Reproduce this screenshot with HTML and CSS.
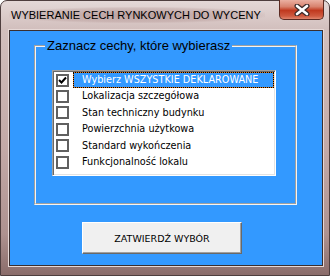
FILE: index.html
```html
<!DOCTYPE html>
<html lang="pl">
<head>
    <meta charset="UTF-8">
    <title>Wybieranie cech rynkowych</title>
    <link rel="stylesheet" href="styles.css">
</head>
<body>

<div class="window">
    <div class="title-bar">
        <span class="title">WYBIERANIE CECH RYNKOWYCH DO WYCENY</span>
        <div class="close-btn">
            <svg width="16" height="12" viewBox="0 0 16 12">
                <path d="M3 2 L13 10 M13 2 L3 10" stroke="#3c2a2a" stroke-width="5" stroke-linecap="round"/>
                <path d="M3 2 L13 10 M13 2 L3 10" stroke="#fff" stroke-width="2.6" stroke-linecap="round"/>
            </svg>
        </div>
    </div>

    <div class="client">
        <fieldset class="group">
            <legend>Zaznacz cechy, które wybierasz</legend>
            <div class="listbox">
                <!-- pierwsza pozycja zaznaczona -->
                <div class="row">
                    <span class="check">
                        <svg width="9" height="9" viewBox="0 0 9 9">
                            <polyline points="1,4 3.5,6.5 8,1.5" fill="none" stroke="#000" stroke-width="2"/>
                        </svg>
                    </span>
                    <span class="label selected">Wybierz WSZYSTKIE DEKLAROWANE</span>
                </div>
                <div class="row">
                    <span class="check"></span>
                    <span class="label">Lokalizacja szczegółowa</span>
                </div>
                <div class="row">
                    <span class="check"></span>
                    <span class="label">Stan techniczny budynku</span>
                </div>
                <div class="row">
                    <span class="check"></span>
                    <span class="label">Powierzchnia użytkowa</span>
                </div>
                <div class="row">
                    <span class="check"></span>
                    <span class="label">Standard wykończenia</span>
                </div>
                <div class="row">
                    <span class="check"></span>
                    <span class="label">Funkcjonalność lokalu</span>
                </div>
            </div>
        </fieldset>
        <button class="confirm">ZATWIERDŹ WYBÓR</button>
    </div>
</div>

</body>
</html>
```

FILE: styles.css
```css
body {
    margin: 0;
    background-color: #fff;
    font-family: 'Liberation Sans', Arial, sans-serif;
}
.window {
    width: 330px;
    height: 276px;
    box-sizing: border-box;
    border: 1px solid #4e3e3e;
    border-radius: 7px 7px 0 0;
    padding: 0 6px 9px 8px;
    background: linear-gradient(to bottom, #e4d8d7 0, #d2bfbd 28px, #c2a8a6 55%, #ae9290 85%, #8a6c6a 100%);
}
/* 标题栏 */
.title-bar {
    display: flex;
    align-items: flex-start;
    height: 29px;
}
.title {
    margin-top: 6px;
    padding: 1px 4px 1px 2px;
    font-size: 11px;
    line-height: 14px;
    color: #000;
    background: radial-gradient(ellipse at center, rgba(150, 110, 108, 0.45) 0, rgba(150, 110, 108, 0.2) 60%, rgba(150, 110, 108, 0) 75%);
}
.close-btn {
    margin-left: auto;
    margin-top: -1px;
    margin-right: -1px;
    width: 45px;
    height: 20px;
    box-sizing: border-box;
    border: 1px solid #5c2a22;
    border-top: none;
    border-radius: 0 0 5px 5px;
    background: linear-gradient(to bottom, #eab0a2 0, #d8826e 35%, #c0391f 55%, #cf5a40 85%, #e0866e 100%);
    display: flex;
    justify-content: center;
    align-items: center;
}
.client {
    height: 236px;
    box-sizing: border-box;
    border: 1px solid #3a2e2e;
    box-shadow: 0 0 0 1px #e6d8d6;
    background-color: #3399ff;
    padding: 8px 0 0 24px;
}
/* 分组框 */
.group {
    margin: 0;
    width: 263px;
    height: 166px;
    box-sizing: border-box;
    border: 2px groove #f4f4f4;
    padding: 0 0 0 16px;
}
.group legend {
    margin-left: -7px;
    padding: 0 2px;
    font-size: 13px;
    line-height: 13px;
    color: #000;
}
.listbox {
    margin-top: 18px;
    width: 224px;
    height: 106px;
    box-sizing: border-box;
    border-top: 1px solid #a0a0a0;
    border-left: 1px solid #a0a0a0;
    border-right: 1px solid #fff;
    border-bottom: 1px solid #fff;
    box-shadow: inset 1px 1px 0 #696969, inset -1px -1px 0 #e3e3e3;
    background-color: #fff;
    padding: 1px 1px 0 1px;
}
.row {
    display: flex;
    align-items: center;
    height: 16.4px;
}
.check {
    margin-left: 2px;
    width: 13px;
    height: 13px;
    box-sizing: border-box;
    border: 2px solid #606060;
    background-color: #fff;
    display: flex;
    justify-content: center;
    align-items: center;
}
.label {
    flex: 1;
    margin-left: 4px;
    height: 100%;
    box-sizing: border-box;
    padding-left: 8px;
    border: 1px solid transparent;
    font-family: 'DejaVu Sans', Verdana, sans-serif;
    font-size: 9.7px;
    line-height: 14px;
    color: #000;
    white-space: nowrap;
}
.label.selected {
    border: 1px dotted #000;
    background: linear-gradient(#3399ff, #3399ff) padding-box, #e07a1c;
    color: #fff;
}
.confirm {
    display: block;
    margin: 17px 0 0 48px;
    width: 160px;
    height: 32px;
    padding: 0;
    border-top: 1px solid #fff;
    border-left: 1px solid #fff;
    border-right: 1px solid #696969;
    border-bottom: 1px solid #696969;
    box-shadow: inset -1px -1px 0 #a0a0a0;
    background-color: #f0f0f0;
    font-family: 'DejaVu Sans', Verdana, sans-serif;
    font-size: 9.5px;
    color: #000;
}
```
